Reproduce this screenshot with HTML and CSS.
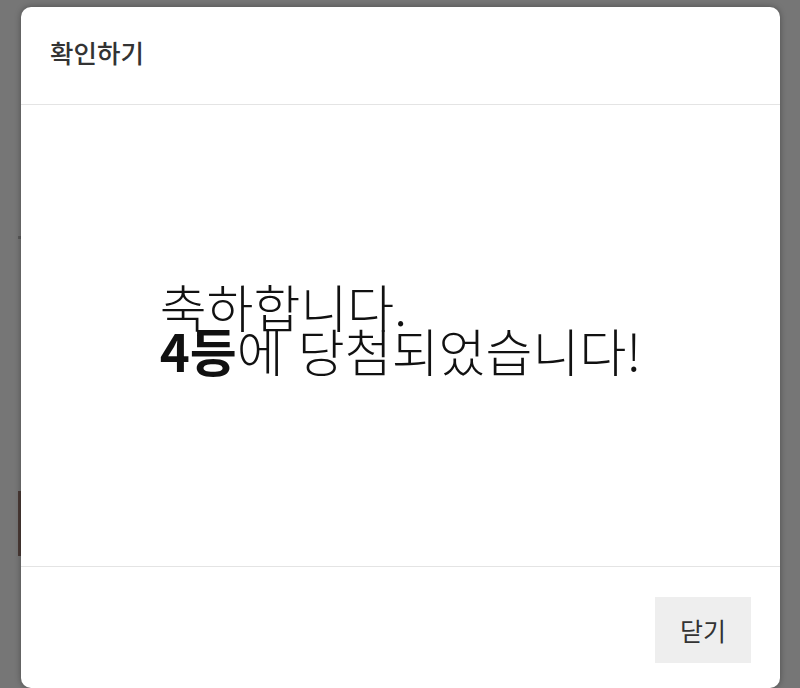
FILE: index.html
```html
<!DOCTYPE html>
<html lang="ko">
<head>
<meta charset="utf-8">
<link rel="stylesheet" href="styles.css">
</head>
<body>
<div class="backdrop-mark"></div>
<div class="backdrop-tick"></div>
<div class="modal">
  <header class="modal-header">확인하기</header>
  <main class="modal-body">
    <p class="message">축하합니다.<br><strong>4등</strong>에 당첨되었습니다!</p>
  </main>
  <footer class="modal-footer">
    <button class="close-btn">닫기</button>
  </footer>
</div>
</body>
</html>
```

FILE: styles.css
```css
html, body {
  margin: 0;
  padding: 0;
  height: 100%;
  overflow: hidden;
}
body {
  background: #767676;
  font-family: "Noto Sans CJK KR", "Noto Sans", sans-serif;
  position: relative;
}
.backdrop-mark {
  position: absolute;
  left: 18px;
  top: 491px;
  width: 3px;
  height: 65px;
  background: #4a3a36;
}
.backdrop-tick {
  position: absolute;
  left: 18px;
  top: 236px;
  width: 3px;
  height: 3px;
  background: #5a5a5a;
}
.modal {
  position: relative;
  margin: 7px 0 0 21px;
  width: 759px;
  height: 681px;
  background: #fff;
  border-radius: 10px;
  box-shadow: 0 0 6px rgba(0,0,0,0.35);
  display: flex;
  flex-direction: column;
}
.modal-header {
  height: 98px;
  box-sizing: border-box;
  border-bottom: 1px solid #e4e4e4;
  display: flex;
  align-items: center;
  padding: 0 0 8px 29px;
  font-size: 25.5px;
  font-weight: 500;
  color: #333;
}
.modal-body {
  flex: 1;
  display: flex;
  align-items: center;
  justify-content: center;
  padding-bottom: 14px;
}
.message {
  margin: 0;
  font-size: 51px;
  line-height: 0.86;
  font-weight: 300;
  color: #111;
  text-align: left;
}
.message strong {
  font-weight: 700;
}
.modal-footer {
  height: 122px;
  box-sizing: border-box;
  border-top: 1px solid #e4e4e4;
  display: flex;
  justify-content: flex-end;
  align-items: flex-start;
  padding: 30px 29px 0 0;
}
.close-btn {
  width: 96px;
  height: 66px;
  border: none;
  background: #eeeeee;
  font-family: inherit;
  font-size: 25px;
  color: #333;
  padding: 0;
}
```
